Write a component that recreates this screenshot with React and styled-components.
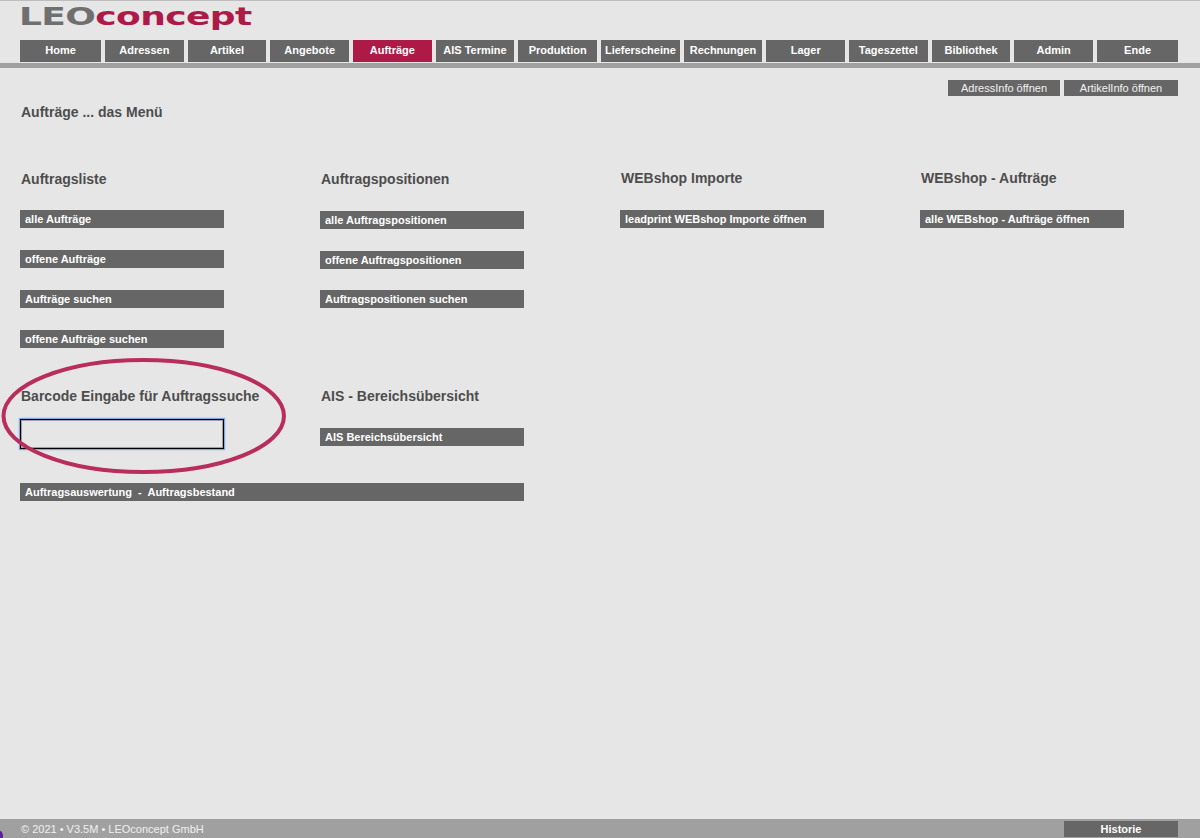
import React from 'react';
import styled, { createGlobalStyle } from 'styled-components';

const GlobalStyle = createGlobalStyle`
  html, body {
    margin: 0;
    padding: 0;
    height: 100%;
    background: #e6e6e6;
  }
  #root {
    height: 100%;
  }
`;

const Page = styled.div`
  position: relative;
  height: 838px;
  overflow: hidden;
  display: flex;
  flex-direction: column;
  border-top: 1px solid #bdbdbd;
  box-sizing: border-box;
  font-family: 'Liberation Sans', Arial, sans-serif;
  background: #e6e6e6;
`;

const Header = styled.header`
  height: 39px;
  padding-left: 19px;
  overflow: hidden;
`;

const Logo = styled.div`
  display: inline-block;
  font-family: 'DejaVu Sans', sans-serif;
  font-weight: 700;
  font-size: 24px;
  line-height: 32px;
  white-space: nowrap;
  transform: scaleX(1.5);
  transform-origin: left center;
  letter-spacing: -0.4px;
`;

const LogoGrey = styled.span`
  color: #6f6f6f;
`;

const LogoRed = styled.span`
  color: #ad1a47;
`;

const Nav = styled.nav`
  display: flex;
  gap: 4px;
  height: 23px;
  padding: 0 22px 0 20px;
  border-bottom: 5px solid #a0a0a0;
`;

const NavItem = styled.a`
  flex: 1 1 0;
  height: 22px;
  background: ${(p) => (p.$active ? '#ad1a47' : '#666666')};
  color: #ffffff;
  font-size: 11px;
  font-weight: 700;
  line-height: 21px;
  text-align: center;
  white-space: nowrap;

  &:first-child,
  &:last-child {
    flex: 0 0 81px;
  }
`;

const Main = styled.main`
  flex: 1;
  padding: 12px 22px 0 20px;
`;

const InfoBar = styled.div`
  display: flex;
  justify-content: flex-end;
  gap: 4px;
`;

const InfoButton = styled.a`
  width: ${(p) => p.$width}px;
  height: 16px;
  background: #666666;
  color: #f2f2f2;
  font-size: 11px;
  line-height: 16px;
  text-align: center;
`;

const PageTitle = styled.h1`
  margin: 7px 0 0 1px;
  font-size: 14px;
  line-height: 18px;
  font-weight: 700;
  color: #4d4d4d;
`;

const Grid = styled.div`
  display: grid;
  grid-template-columns: repeat(4, 300px);
  margin: 49px 0 15px;
`;

const Column = styled.section`
  display: flex;
  flex-direction: column;
  align-items: flex-start;
  height: ${(p) => p.$height || 'auto'};
`;

const Heading = styled.h2`
  margin: ${(p) => p.$top || 0}px 0 ${(p) => p.$bottom}px 1px;
  font-size: 14px;
  line-height: 18px;
  font-weight: 700;
  color: #4d4d4d;
`;

const MenuButton = styled.a`
  display: block;
  box-sizing: border-box;
  width: ${(p) => p.$width || 204}px;
  height: 18px;
  margin-bottom: ${(p) => (p.$gap === undefined ? 22 : p.$gap)}px;
  padding-left: 5px;
  background: #666666;
  color: #ffffff;
  font-size: 11px;
  font-weight: 700;
  line-height: 18px;
  white-space: pre;
`;

const BarcodeInput = styled.input`
  box-sizing: border-box;
  width: 204px;
  height: 30px;
  margin: 0;
  background: #e6e6e6;
  border: 1px solid #000000;
  outline: none;
  box-shadow: inset 0 0 0 1px rgba(0, 0, 0, 0.3), 0 0 0 1px #7ea6e8, 0 0 2px 1px #a9c5f0;
`;

const Marker = styled.svg`
  position: absolute;
  left: 0;
  top: 349px;
  pointer-events: none;
`;

const Footer = styled.footer`
  position: relative;
  display: flex;
  align-items: center;
  justify-content: space-between;
  height: 19px;
  padding: 0 22px 0 21px;
  background: #a0a0a0;
`;

const Copyright = styled.span`
  color: #f0f0f0;
  font-size: 11px;
`;

const HistoryButton = styled.a`
  width: 114px;
  height: 16px;
  background: #666666;
  color: #ffffff;
  font-size: 11px;
  font-weight: 700;
  line-height: 16px;
  text-align: center;
`;

const CornerMark = styled.span`
  position: absolute;
  left: -3px;
  bottom: -3px;
  width: 6px;
  height: 10px;
  border-radius: 50%;
  background: #5b1f9a;
`;

const navItems = ['Home', 'Adressen', 'Artikel', 'Angebote', 'Aufträge', 'AIS Termine', 'Produktion', 'Lieferscheine', 'Rechnungen', 'Lager', 'Tageszettel', 'Bibliothek', 'Admin', 'Ende'];

export default function App() {
  return (
    <Page>
      <GlobalStyle />
      <Header>
        <Logo>
          <LogoGrey>LEO</LogoGrey>
          <LogoRed>concept</LogoRed>
        </Logo>
      </Header>
      <Nav>
        {navItems.map((item) => (
          <NavItem key={item} $active={item === 'Aufträge'}>{item}</NavItem>
        ))}
      </Nav>
      <Main>
        <InfoBar>
          <InfoButton $width={112}>AdressInfo öffnen</InfoButton>
          <InfoButton $width={114}>ArtikelInfo öffnen</InfoButton>
        </InfoBar>
        <PageTitle>Aufträge ... das Menü</PageTitle>
        <Grid>
          <Column $height="217px">
            <Heading $bottom={22}>Auftragsliste</Heading>
            <MenuButton>alle Aufträge</MenuButton>
            <MenuButton>offene Aufträge</MenuButton>
            <MenuButton>Aufträge suchen</MenuButton>
            <MenuButton>offene Aufträge suchen</MenuButton>
          </Column>
          <Column>
            <Heading $bottom={23}>Auftragspositionen</Heading>
            <MenuButton>alle Auftragspositionen</MenuButton>
            <MenuButton $gap={21}>offene Auftragspositionen</MenuButton>
            <MenuButton>Auftragspositionen suchen</MenuButton>
          </Column>
          <Column>
            <Heading $top={-1} $bottom={23}>WEBshop Importe</Heading>
            <MenuButton>leadprint WEBshop Importe öffnen</MenuButton>
          </Column>
          <Column>
            <Heading $top={-1} $bottom={23}>WEBshop - Aufträge</Heading>
            <MenuButton>alle WEBshop - Aufträge öffnen</MenuButton>
          </Column>
          <Column>
            <Heading $bottom={14}>Barcode Eingabe für Auftragssuche</Heading>
            <BarcodeInput />
          </Column>
          <Column>
            <Heading $bottom={23}>AIS - Bereichsübersicht</Heading>
            <MenuButton>AIS Bereichsübersicht</MenuButton>
          </Column>
        </Grid>
        <MenuButton $width={504}>{'Auftragsauswertung  -  Auftragsbestand'}</MenuButton>
      </Main>
      <Footer>
        <Copyright>© 2021 • V3.5M • LEOconcept GmbH</Copyright>
        <HistoryButton>Historie</HistoryButton>
        <CornerMark />
      </Footer>
      <Marker width="300" height="130" viewBox="0 0 300 130">
        <path
          d="M3.5 66 C3.5 35 66 10 143 10 C221 10 284 35 284 66 C284 97 221 122 143 122 C66 122 3.5 97 3.5 66 Z"
          fill="none"
          stroke="#b92d5d"
          strokeWidth="4"
        />
      </Marker>
    </Page>
  );
}
